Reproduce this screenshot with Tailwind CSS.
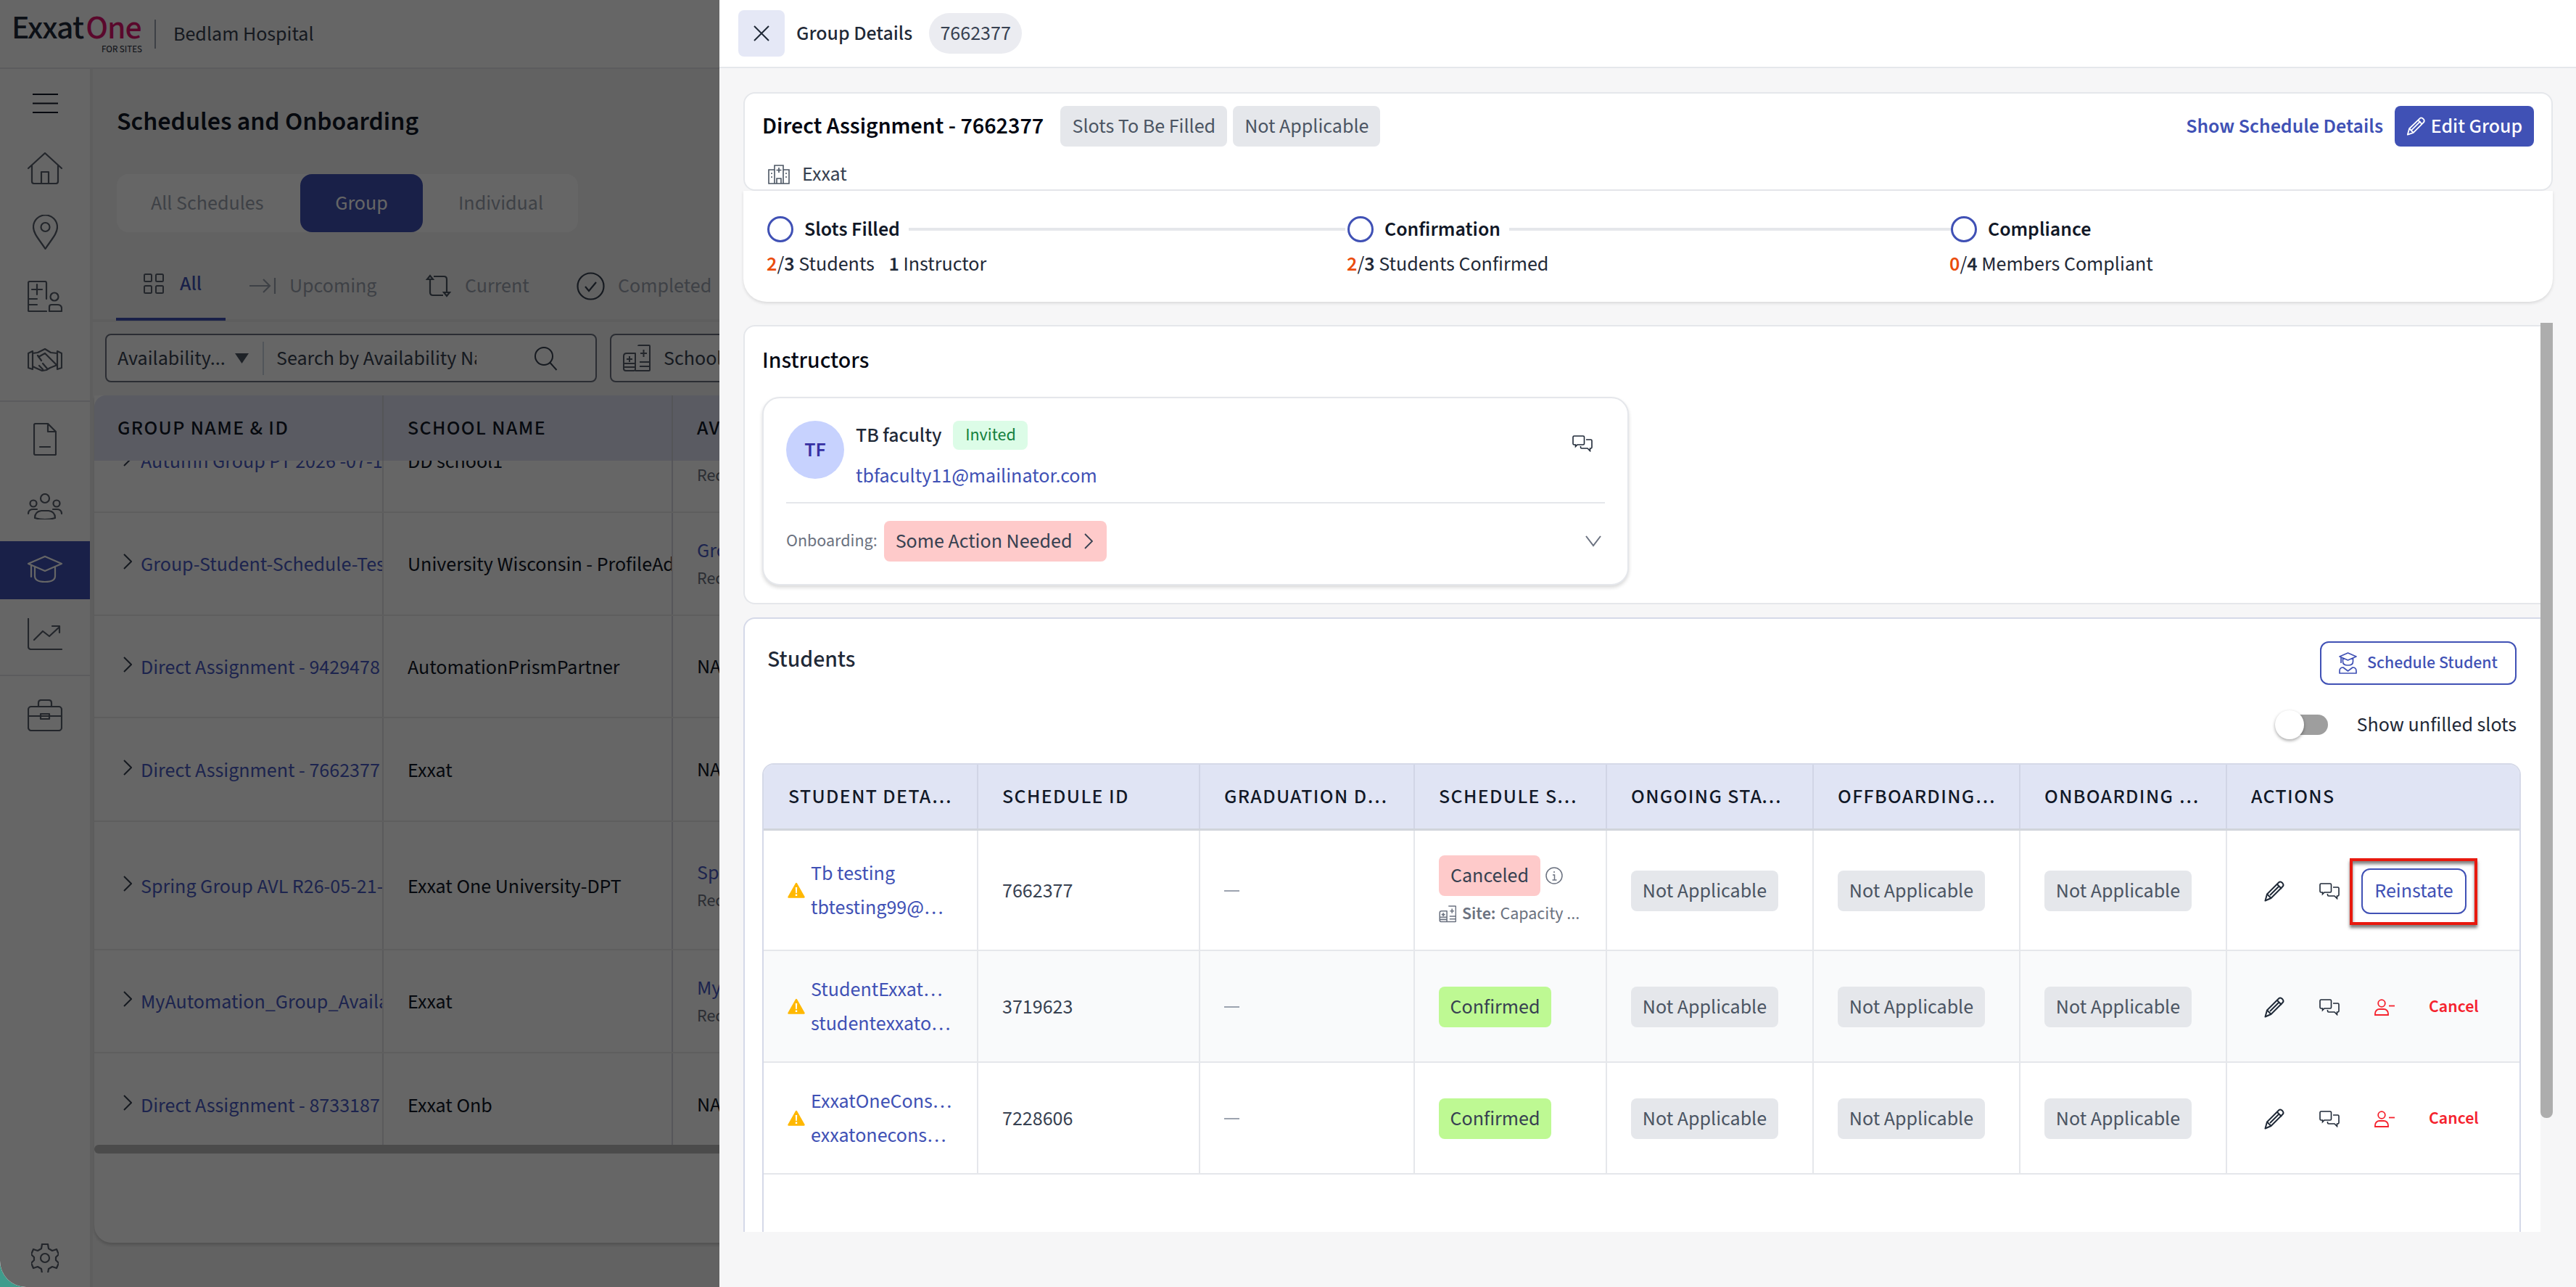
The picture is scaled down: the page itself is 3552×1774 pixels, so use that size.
<!DOCTYPE html>
<html lang="en">
<head>
  <meta charset="UTF-8" />
  <title>Group Details</title>
  <script src="https://cdn.jsdelivr.net/npm/@tailwindcss/browser@4"></script>
</head>
<body class="bg-white">
<div class="relative w-[3552px] h-[1774px] overflow-hidden bg-[#3f9c8c] font-['Source_Sans_3','Noto_Sans',sans-serif] text-[28px] text-[#111827]">

  <!-- app behind the drawer -->
  <div class="w-full h-full flex flex-col bg-[#f6f6f6] rounded-bl-[36px] overflow-hidden">
    <header class="h-[95px] shrink-0 bg-white border-b-2 border-[#e5e7eb] flex items-center pl-[16px]">
      <div class="w-[180px] h-[60px] mt-[-6px] flex flex-col">
        <div class="text-[46px] leading-[46px] mt-[2px] tracking-[-1px] whitespace-nowrap text-[#1f2937] font-medium">Exxat <span class="text-[#e0146f] ml-[-5px]">One</span></div>
        <div class="text-right text-[13px] leading-[12px] text-[#1f2937] whitespace-nowrap">FOR SITES</div>
      </div>
      <div class="w-[2px] h-[40px] bg-[#9ca3af] ml-[17px]"></div>
      <div class="ml-[24px] text-[#374151]">Bedlam Hospital</div>
    </header>
    <div class="flex-1 flex min-h-0">
      <aside id="side" class="w-[128px] shrink-0 border-r-4 border-[#ececec] bg-white flex flex-col items-stretch relative"></aside>
      <main class="flex-1 min-w-0 flex flex-col">
        <h1 class="ml-[33px] mt-[48px] h-[50px] leading-[50px] text-[36px] font-semibold text-[#111827]">Schedules and Onboarding</h1>
        <div class="ml-[33px] mt-[47px] w-[636px] h-[80px] bg-white rounded-[16px] flex items-center text-[#9ca3af]">
          <div class="w-[253px] pl-[47px]">All Schedules</div>
          <div class="w-[169px] h-full bg-[#4051b5] rounded-[16px] text-white flex items-center justify-center">Group</div>
          <div class="pl-[49px]">Individual</div>
        </div>
        <div class="h-[124px] border-b-4 border-[#ececec] relative flex items-center pt-[28px] text-[#9ca3af]">
          <div class="absolute left-[32px] bottom-[-2px] w-[151px] h-[4px] bg-[#4051b5]"></div>
          <span id="tabAll" class="ml-[70px] w-[28px] h-[28px] mt-[-6px]"></span>
          <span class="ml-[22px] w-[96px] text-[#4051b5] font-medium mt-[-6px]">All</span>
          <span id="tabUp" class="w-[37px] h-[24px]"></span>
          <span class="ml-[18px] w-[187px]">Upcoming</span>
          <span id="tabCur" class="w-[38px] h-[38px]"></span>
          <span class="ml-[17px] w-[154px]">Current</span>
          <span id="tabDone" class="w-[39px] h-[39px]"></span>
          <span class="ml-[18px]">Completed</span>
        </div>
        <div class="mt-[16px] ml-[17px] h-[67px] flex">
          <div class="w-[678px] h-full border-2 border-[#6b7280] rounded-[8px] flex items-center bg-white text-[#374151] relative">
            <span class="ml-[15px] w-[155px]">Availability...</span>
            <svg class="ml-[6px]" width="21" height="16" viewBox="0 0 21 16"><path d="M1 1h19L10.500 15z" fill="#4b5563"/></svg>
            <span class="ml-[18px] w-[2px] h-[46px] bg-[#cbd5e1]"></span>
            <span class="ml-[17px] w-[276px] overflow-hidden whitespace-nowrap">Search by Availability Name</span>
            <svg class="ml-[79px]" width="34" height="34" viewBox="0 0 34 34" fill="none" stroke="#374151" stroke-width="2"><circle cx="14" cy="14" r="12"/><path d="M22.500 23l9 10"/></svg>
          </div>
          <div class="ml-[18px] w-[300px] h-full border-2 border-[#6b7280] rounded-[8px] flex items-center bg-white text-[#374151]">
            <span id="schoolIcon" class="ml-[15px] w-[39px] h-[38px]"></span>
            <span class="ml-[18px]">School</span>
          </div>
        </div>
        <div class="mt-[18px] ml-[2px] h-[1168px] bg-white rounded-bl-[24px] shadow-[0_3px_4px_rgba(0,0,0,0.18)] flex flex-col overflow-hidden">
          <div class="h-[90px] shrink-0 bg-[#e0e4f4] rounded-tl-[16px] grid grid-cols-[399px_399px_400px] items-center uppercase tracking-[1.400px] text-[28px] font-medium text-[#111827]">
            <div class="pl-[32px] h-full flex items-center border-r-2 border-[#d1d5db]">Group Name &amp; ID</div>
            <div class="pl-[33px] h-full flex items-center border-r-2 border-[#d1d5db]">School Name</div>
            <div class="pl-[33px]">Availability</div>
          </div>
          <div id="bgRows" class="h-[943px] shrink-0 overflow-hidden"></div>
          <div class="h-[12px] shrink-0 bg-[#bcbcbc] rounded-full"></div>
        </div>
      </main>
    </div>
  </div>

  <!-- dim layer -->
  <div class="absolute inset-0 bg-black/60 rounded-bl-[36px]"></div>

  <!-- drawer -->
  <section class="absolute top-0 left-[992px] w-[2560px] h-full bg-[#f6f6f7] flex flex-col">
    <div class="h-[94px] shrink-0 bg-white border-b-2 border-[#e5e7eb] flex items-center pl-[26px]">
      <button class="w-[64px] h-[64px] bg-[#e5e8f6] rounded-[8px] flex items-center justify-center">
        <svg width="24" height="24" viewBox="0 0 24 24" fill="none" stroke="#1f2937" stroke-width="2"><path d="M2 2l20 20M22 2L2 22"/></svg>
      </button>
      <span class="ml-[16px] font-medium text-[#1f2937]">Group Details</span>
      <span class="ml-[23px] w-[128px] h-[56px] bg-[#ebecf1] rounded-[28px] flex items-center justify-center text-[#374151]">7662377</span>
    </div>

    <div class="ml-[33px] mr-[32px] mt-[33px] h-[136px] shrink-0 bg-white border-2 border-[#e5e7eb] rounded-[16px] px-[24px] pt-[17px]">
      <div class="flex items-center h-[56px]">
        <span class="text-[32px] font-semibold text-[#030712]">Direct Assignment - 7662377</span>
        <span class="ml-[23px] h-[56px] w-[230px] flex items-center justify-center bg-[#e5e7eb] rounded-[8px] text-[#4b5563]">Slots To Be Filled</span>
        <span class="ml-[8px] h-[56px] w-[203px] flex items-center justify-center bg-[#e5e7eb] rounded-[8px] text-[#4b5563]">Not Applicable</span>
        <a class="ml-auto text-[#4051b5] font-semibold">Show Schedule Details</a>
        <button class="ml-[16px] w-[192px] h-[56px] bg-[#4051b5] rounded-[8px] text-white font-medium flex items-center justify-center gap-[8px]">
          <svg width="26" height="28" viewBox="0 0 28 29" fill="none" stroke="#fff" stroke-width="2" stroke-linejoin="round"><path d="M2 27l2.500-9L20 3q2-2 4.500 0L26 4.500q1.500 2.500-.5 4.500l-15 15z"/><path d="M4.500 18l6 6M17.500 5.500l6 6M8 20L21 7"/></svg>
          Edit Group
        </button>
      </div>
      <div class="flex items-center mt-[21px] pl-[7px] h-[34px]">
        <svg width="32" height="28" viewBox="0 0 32 28" fill="none" stroke="#4b5563" stroke-width="1.600"><path d="M10 27V2h12v25M10 8H2v19h28V8h-8M13 27v-7h6v7M16 5v7M12.500 8.500h7M5 13h2M5 18h2M25 13h2M25 18h2"/></svg>
        <span class="ml-[16px] text-[#374151]">Exxat</span>
      </div>
    </div>

    <div class="ml-[33px] mr-[32px] h-[153px] shrink-0 bg-white rounded-b-[32px] shadow-[0_2px_4px_rgba(0,0,0,0.12)] pl-[33px] pt-[35px]">
      <div class="flex">
        <div class="w-[800px] flex items-center h-[36px]">
          <span class="w-[36px] h-[36px] rounded-full border-[3px] border-[#4051b5]"></span>
          <span class="ml-[15px] font-semibold text-[#111827]">Slots Filled</span>
          <span class="ml-[12px] mr-[3px] flex-1 h-[4px] bg-[#e5e7eb]"></span>
        </div>
        <div class="w-[832px] flex items-center h-[36px]">
          <span class="w-[36px] h-[36px] rounded-full border-[3px] border-[#4051b5]"></span>
          <span class="ml-[15px] font-semibold text-[#111827]">Confirmation</span>
          <span class="ml-[12px] flex-1 h-[4px] bg-[#e5e7eb]"></span>
        </div>
        <div class="flex items-center h-[36px]">
          <span class="w-[36px] h-[36px] rounded-full border-[3px] border-[#4051b5]"></span>
          <span class="ml-[15px] font-semibold text-[#111827]">Compliance</span>
        </div>
      </div>
      <div class="flex mt-[12px] h-[36px] leading-[36px] text-[#1f2937]">
        <div class="w-[800px] ml-[-1px]"><b class="font-semibold text-[#ea4c0c]">2</b>/<b class="font-semibold">3</b> Students <b class="font-semibold ml-[14px]">1</b> Instructor</div>
        <div class="w-[831px]"><b class="font-semibold text-[#ea4c0c]">2</b>/<b class="font-semibold">3</b> Students Confirmed</div>
        <div><b class="font-semibold text-[#ea4c0c]">0</b>/<b class="font-semibold">4</b> Members Compliant</div>
      </div>
    </div>

    <div class="ml-[33px] mr-[32px] mt-[29px] h-[1253px] shrink-0 flex overflow-hidden">
      <div class="flex-1 min-w-0 flex flex-col">
        <div class="mt-[3px] h-[385px] shrink-0 bg-white border-2 border-[#e5e7eb] border-r-0 rounded-l-[16px] pl-[24px] pt-[27px]">
          <h2 class="text-[32px] font-medium leading-[40px] text-[#030712]">Instructors</h2>
          <div class="mt-[30px] w-[1195px] h-[260px] bg-white border-2 border-[#e5e7eb] rounded-[24px] shadow-[0_3px_5px_rgba(0,0,0,0.15)] px-[31px] pt-[31px]">
            <div class="flex h-[80px] relative">
              <span class="w-[80px] h-[80px] rounded-full bg-[#c7d2fe] flex items-center justify-center font-semibold text-[#3730a3]">TF</span>
              <div class="ml-[16px]">
                <div class="flex items-center h-[40px]"><span class="font-medium text-[#1f2937]">TB faculty</span><span class="ml-[16px] w-[103px] h-[40px] rounded-[8px] bg-[#dcfce7] text-[#15803d] text-[24px] flex items-center justify-center">Invited</span></div>
                <div class="mt-[20px] h-[32px] leading-[32px] text-[#4051b5]">tbfaculty11@mailinator.com</div>
              </div>
              <span class="chat absolute right-[17px] top-[20px] w-[28px] h-[23px]"></span>
            </div>
            <div class="h-[2px] bg-[#e5e7eb] mt-[32px]"></div>
            <div class="flex items-center mt-[24px] h-[56px]">
              <span class="text-[24px] text-[#6b7280]">Onboarding:</span>
              <span class="ml-[9px] h-[56px] w-[307px] bg-[#fecaca] rounded-[8px] flex items-center pl-[16px] text-[#374151]">Some Action Needed
                <svg class="ml-[17px]" width="12" height="24" viewBox="0 0 12 24" fill="none" stroke="#374151" stroke-width="1.800"><path d="M1 2l10 10L1 22"/></svg>
              </span>
              <svg class="ml-auto mr-[5px]" width="22" height="16" viewBox="0 0 22 16" fill="none" stroke="#6b7280" stroke-width="2"><path d="M1 1l10 13L21 1"/></svg>
            </div>
          </div>
        </div>
        <div class="mt-[18px] flex-1 min-h-0 bg-white border-2 border-[#d5d9e8] border-r-0 border-b-0 rounded-tl-[16px] pl-[24px] overflow-hidden">
          <div class="flex items-start justify-between pr-[33px] pt-[31px] h-[125px]">
            <h2 class="ml-[7px] mt-[5px] text-[32px] font-medium leading-[40px] text-[#1f2937]">Students</h2>
            <button class="w-[271px] h-[60px] border-2 border-[#4051b5] rounded-[12px] flex items-center justify-center gap-[14px] text-[24px] font-medium text-[#4051b5]">
              <svg width="25" height="30" viewBox="0 0 25 30" fill="none" stroke="#4051b5" stroke-width="1.700" stroke-linejoin="round"><path d="M12.500 1L24 6l-11.500 5L1 6zM5.500 8v5q0 5 7 5t7-5V8M3 7v8M1 29v-3q0-5 5-5l6.500 5 6.500-5q5 0 5 5v3z"/></svg>
              Schedule Student
            </button>
          </div>
          <div class="flex items-center justify-end pr-[33px] h-[41px]">
            <span class="relative w-[73px] h-[28px] mr-[40px]">
              <span class="absolute left-[28px] top-0 w-[45px] h-[28px] rounded-r-[14px] bg-[#9e9e9e]"></span>
              <span class="absolute left-0 top-[-6px] w-[40px] h-[40px] rounded-full bg-white shadow-[0_2px_4px_rgba(0,0,0,0.35)]"></span>
            </span>
            <span class="text-[#1f2937]">Show unfilled slots</span>
          </div>
          <div class="mt-[33px] w-[2425px] h-[800px] border-2 border-[#d5d9e8] rounded-t-[16px] border-b-0 overflow-hidden">
            <div class="h-[91px] bg-[#e0e4f4] border-b-[3px] border-[#d1d5db] grid grid-cols-[296px_306px_296px_265px_285px_285px_285px_403px] uppercase tracking-[1.400px] text-[28px] font-medium text-[#111827]" id="stHead"></div>
            <div id="stRows"></div>
          </div>
        </div>
      </div>
      <div class="w-[17px] shrink-0 h-[1096px] bg-[#adadad] rounded-b-[8px]"></div>
    </div>
  </section>
</div>

<script>
  const chat = c => `<svg width="28" height="23" viewBox="0 0 28 23" fill="none" stroke="${c}" stroke-width="1.600"><path d="M2.500 1H15a1.500 1.500 0 0 1 1.500 1.500v9A1.500 1.500 0 0 1 15 13H7l-2.500 2.500V13h-2A1.500 1.500 0 0 1 1 11.500v-9A1.500 1.500 0 0 1 2.500 1z"/><path d="M19 6h6.500A1.500 1.500 0 0 1 27 7.500v9a1.500 1.500 0 0 1-1.500 1.500h-1v3.500L21 18h-8a1.500 1.500 0 0 1-1.500-1.500V15"/></svg>`;
  const pencil = `<svg width="28" height="29" viewBox="0 0 28 29" fill="none" stroke="#1f2937" stroke-width="2" stroke-linejoin="round"><path d="M1.500 27.500l2.500-9L20 2.500q2-2 4.500 0l1 1q2 2.500 0 4.500L9.500 24z"/><path d="M4 18.500l5.500 5.500M18 5l6 6M8 20L20.500 7.500"/></svg>`;
  const personMinus = `<svg width="28" height="23" viewBox="0 0 28 23" fill="none" stroke="#f5222d" stroke-width="1.800"><circle cx="10" cy="6" r="4.800"/><path d="M1 22v-2a6 6 0 0 1 6-6h6a6 6 0 0 1 6 6v2z"/><path d="M20 9.500h8"/></svg>`;
  const warn = `<svg width="24" height="22" viewBox="0 0 24 22" class="shrink-0"><path d="M12 2L22.500 20.500h-21z" fill="#ffb800" stroke="#ffb800" stroke-width="2.500" stroke-linejoin="round"/><path d="M10.800 7h2.400l-.4 8h-1.600zM10.800 16.500h2.400v2.400h-2.400z" fill="#fff"/></svg>`;
  const bedIcon = (w, h, c, sw) => `<svg width="${w}" height="${h}" viewBox="0 0 39 38" fill="none" stroke="${c}" stroke-width="${sw}" stroke-linejoin="round"><path d="M2 16q0-4 4-4h12v22q0 2-2 2H5q-3 0-3-3zM2 26h16M2 31h16M6 20h8M10 16v8M22 2q0-1 1-1h14q1 0 1 1v33q0 1-1 1H18M24 24h14M24 30h14M25 12h9M29.500 7v10"/></svg>`;

  // sidebar of the app behind the drawer
  const ic = 'fill="none" stroke="#59606d" stroke-width="2.200" stroke-linejoin="round" stroke-linecap="round"';
  const sideIcons = [
    {top: 34, w: 35, h: 27, dark: 1, svg: `<path d="M0 1h35M0 13.500h35M0 26h35"/>`},
    {top: 115, w: 48, h: 44, svg: `<path d="M1 22L24 1l23 21M6 18v22q0 3 3 3h30q3 0 3-3V18M19 43V27h10v16"/>`},
    {top: 201, w: 35, h: 48, svg: `<path d="M17.500 47C9 34 1 26 1 17a16.500 16.500 0 0 1 33 0c0 9-8 17-16.500 30z"/><circle cx="17.500" cy="17" r="6"/>`},
    {top: 292, w: 48, h: 43, svg: `<path d="M26 25V3q0-2-2-2H3Q1 1 1 3v38q0 1 1 1h24M6 12h14M13 5v14M1 25h12M1 33h12"/><circle cx="37" cy="22" r="5.500"/><path d="M30 42v-6q0-3 3-3h8q6 0 6 5v4z"/>`},
    {top: 385, w: 48, h: 32, svg: `<path d="M7 4l-6 3v20l6 2zM41 4l6 3v20l-6 2zM7 7l7-1 10-5 8 5 9 1M7 25l4 2 9 4 6-1 5-3 10-4M15 12l9-5 15 15M19 17l-5-7M16 24l5 5M21 21l6 7"/>`},
    {top: 488, w: 32, h: 45, svg: `<path d="M1 3q0-2 2-2h17l11 11v31q0 1-1 1H3q-2 0-2-2zM20 1v11h11M9 33h14"/>`},
    {top: 585, w: 48, h: 36, svg: `<circle cx="24" cy="7" r="6"/><circle cx="8" cy="14" r="4.500"/><circle cx="40" cy="14" r="4.500"/><path d="M1 28q0-6 7-6h5M47 28q0-6-7-6h-5M10 34q0-9 9-10h10q9 1 9 10-14 4-28 0z"/>`},
    {top: 671, w: 48, h: 38, active: 1, svg: `<path d="M24 1L47 11 24 21 1 11zM10 16v12q0 8 14 8t14-8V16M5 13v16"/>`},
    {top: 757, w: 48, h: 44, svg: `<path d="M1 1v38q0 4 4 4h42M9 30l12-12 9 7 13-12M34 11h10v9"/>`},
    {top: 869, w: 48, h: 44, svg: `<rect x="1" y="10" width="46" height="33" rx="4"/><path d="M15 10V5q0-4 4-4h10q4 0 4 4v5M1 23h46M18 20h12v7H18z"/>`},
    {top: 1619, w: 38, h: 40, svg: `<path d="M15 1h8l1 6 5 3 6-2 3 7-4 4v4l4 4-3 7-6-2-5 3-1 6h-8l-1-6-5-3-6 2-3-7 4-4v-4l-4-4 3-7 6 2 5-3z"/><circle cx="19" cy="20" r="6"/>`}
  ];
  const side = document.getElementById('side');
  side.innerHTML = `
    <div class="absolute left-0 top-[457px] w-full h-[2px] bg-[#e5e7eb]"></div>
    <div class="absolute left-0 top-[835px] w-full h-[2px] bg-[#e5e7eb]"></div>
    <div class="absolute left-0 top-[651px] w-[124px] h-[80px] bg-[#4051b5]"></div>` +
    sideIcons.map(i => `<svg class="absolute" style="left:${62 - i.w / 2}px;top:${i.top}px" width="${i.w}" height="${i.h}" viewBox="0 0 ${i.w} ${i.h}" ${i.active ? ic.replace('#59606d', '#fff') : i.dark ? ic.replace('#59606d', '#111827') : ic}>${i.svg}</svg>`).join('');

  // tabs
  document.getElementById('tabAll').innerHTML = `<svg width="28" height="28" viewBox="0 0 28 28" fill="none" stroke="#59606d" stroke-width="2"><rect x="1" y="1" width="10" height="10" rx="1.500"/><rect x="17" y="1" width="10" height="10" rx="1.500"/><rect x="1" y="17" width="10" height="10" rx="1.500"/><rect x="17" y="17" width="10" height="10" rx="1.500"/></svg>`;
  document.getElementById('tabUp').innerHTML = `<svg width="37" height="24" viewBox="0 0 37 24" fill="none" stroke="#9ca3af" stroke-width="2.200"><path d="M0 12h28M19 3l9 9-9 9M35 1v22"/></svg>`;
  document.getElementById('tabCur').innerHTML = `<svg width="38" height="38" viewBox="0 0 38 38" fill="none" stroke="#4b5563" stroke-width="2.200"><path d="M7 10v18q0 4 4 4h14M30 28V10q0-4-4-4H12M3 10l4-5 4 5zM26 28h8l-4 5z"/></svg>`;
  document.getElementById('tabDone').innerHTML = `<svg width="39" height="39" viewBox="0 0 39 39" fill="none" stroke="#374151" stroke-width="2.200"><circle cx="19.500" cy="19.500" r="18"/><path d="M12 20l5 6 10-12"/></svg>`;
  document.getElementById('schoolIcon').innerHTML = bedIcon(39, 38, '#59606d', 2);

  // rows of the schedules table
  const link = 'text-[#4a5bc4]';
  const bgRows = [
    {h: 142, mt: -70, name: 'Autumn Group PT 2026 -07-14-AM', school: 'DD school1', third: 'Group 1'},
    {h: 142, name: 'Group-Student-Schedule-Testing-Long', school: 'University Wisconsin - ProfileAdmin', third: 'Group 2'},
    {h: 141, name: 'Direct Assignment - 9429478', school: 'AutomationPrismPartner'},
    {h: 143, name: 'Direct Assignment - 7662377', school: 'Exxat'},
    {h: 177, name: 'Spring Group AVL R26-05-21-Testing', school: 'Exxat One University-DPT', third: 'Spring'},
    {h: 142, name: 'MyAutomation_Group_Availability', school: 'Exxat', third: 'My group'},
    {h: 142, name: 'Direct Assignment - 8733187', school: 'Exxat Onb'}
  ];
  document.getElementById('bgRows').innerHTML = bgRows.map((r, i) => `
    <div class="grid grid-cols-[399px_399px_400px] ${i < 6 ? 'border-b-2' : ''} border-[#ebebeb]" style="height:${r.h}px;margin-top:${r.mt || 0}px">
      <div class="pl-[40px] pt-[2px] flex items-center gap-[12px] border-r-2 border-[#e2e2e6] overflow-hidden whitespace-nowrap">
        <svg class="shrink-0 mt-[-8px]" width="12" height="22" viewBox="0 0 12 22" fill="none" stroke="#374151" stroke-width="2"><path d="M1 1l10 10L1 21"/></svg>
        <span class="${link} min-w-0 overflow-hidden">${r.name}</span>
      </div>
      <div class="pl-[33px] pt-[2px] flex items-center border-r-2 border-[#d8d8e0] overflow-hidden whitespace-nowrap text-[#111827]"><span class="min-w-0 overflow-hidden">${r.school}</span></div>
      <div class="pl-[33px] flex flex-col justify-center whitespace-nowrap">${r.third ? `<span class="${link}">${r.third}</span><span class="text-[24px] text-[#6b7280]">Recurring</span>` : `<span>NA</span>`}</div>
    </div>`).join('');

  // students table
  document.getElementById('stHead').innerHTML = ['Student Details', 'Schedule ID', 'Graduation Date', 'Schedule Status', 'Ongoing Status', 'Offboarding Status', 'Onboarding Status', 'Actions']
    .map((t, i) => `<div class="${i == 0 ? 'pl-[34px]' : 'pl-[33px]'} pr-[28px] min-w-0 flex items-center border-r-2 border-[#d1d5e6] last:border-r-0"><span class="truncate">${t}</span></div>`).join('');

  const chip = '<span class="w-[203px] h-[56px] bg-[#e5e7eb] rounded-[8px] flex items-center justify-center text-[#4b5563]">Not Applicable</span>';
  const cell = 'flex items-center pl-[33px] pt-[2px] border-r-2 border-[#e5e7eb]';
  const students = [
    {h: 166, id: '7662377', a: 'Tb testing', b: 'tbtesting99@mailinator.com', cancel: 1},
    {h: 154, id: '3719623', a: 'StudentExxatOne Automation', b: 'studentexxatone@mailinator.com', alt: 1},
    {h: 154, id: '7228606', a: 'ExxatOneConsortium', b: 'exxatoneconsortium@mailinator.com'}
  ];
  document.getElementById('stRows').innerHTML = students.map(s => `
    <div class="grid grid-cols-[296px_306px_296px_265px_285px_285px_285px_403px] border-b-2 border-[#e5e7eb] ${s.alt ? 'bg-[#f9fafb]' : 'bg-white'}" style="height:${s.h}px">
      <div class="flex items-center pl-[33px] border-r-2 border-[#e5e7eb]">
        ${warn}
        <div class="ml-[8px] w-[196px] flex flex-col gap-[15px] text-[#4051b5] leading-[32px]"><span class="truncate">${s.a}</span><span class="truncate">${s.b}</span></div>
      </div>
      <div class="${cell} text-[#374151]">${s.id}</div>
      <div class="${cell}"><span class="w-[21px] h-[2px] bg-[#9ca3af]"></span></div>
      <div class="${s.cancel ? 'flex flex-col justify-center pl-[33px] border-r-2 border-[#e5e7eb]' : cell}">
        ${s.cancel ? `<div class="flex items-center">
            <span class="w-[140px] h-[56px] bg-[#fecaca] rounded-[8px] flex items-center justify-center text-[#374151]">Canceled</span>
            <svg class="ml-[7px]" width="24" height="24" viewBox="0 0 24 24" fill="none" stroke="#6b7280" stroke-width="1.500"><circle cx="12" cy="12" r="11"/><path d="M12 6v2M10 11h2.500v7M9.500 18h6"/></svg>
          </div>
          <div class="flex items-center mt-[9px] text-[24px] leading-[32px] text-[#6b7280] whitespace-nowrap">${bedIcon(24, 24, '#6b7280', 2.5)}<b class="ml-[8px] font-semibold">Site:</b><span class="ml-[6px]">Capacity ...</span></div>`
        : `<span class="w-[155px] h-[56px] bg-[#bef993] rounded-[8px] flex items-center justify-center text-[#374151]">Confirmed</span>`}
      </div>
      <div class="${cell}">${chip}</div>
      <div class="${cell}">${chip}</div>
      <div class="${cell} border-[#d8dcf0]">${chip}</div>
      <div class="flex items-center pl-[51px] pt-[2px]">
        ${pencil}<span class="ml-[48px]">${chat('#1f2937')}</span>
        ${s.cancel ? `<span class="relative ml-[30px] w-[145px] h-[63px] border-2 border-[#4051b5] rounded-[12px] flex items-center justify-center text-[#4051b5]">Reinstate
            <span class="absolute left-[-18px] right-[-17px] top-[-16px] bottom-[-17px] border-4 border-[#e8190e] shadow-[0_4px_4px_rgba(0,0,0,0.5),inset_0_4px_4px_rgba(0,0,0,0.5)]"></span></span>`
        : `<span class="ml-[48px]">${personMinus}</span><span class="ml-[47px] text-[24px] font-semibold text-[#f5222d]">Cancel</span>`}
      </div>
    </div>`).join('');
  document.querySelectorAll('.chat').forEach(e => e.innerHTML = chat('#1f2937'));
</script>
</body>
</html>
